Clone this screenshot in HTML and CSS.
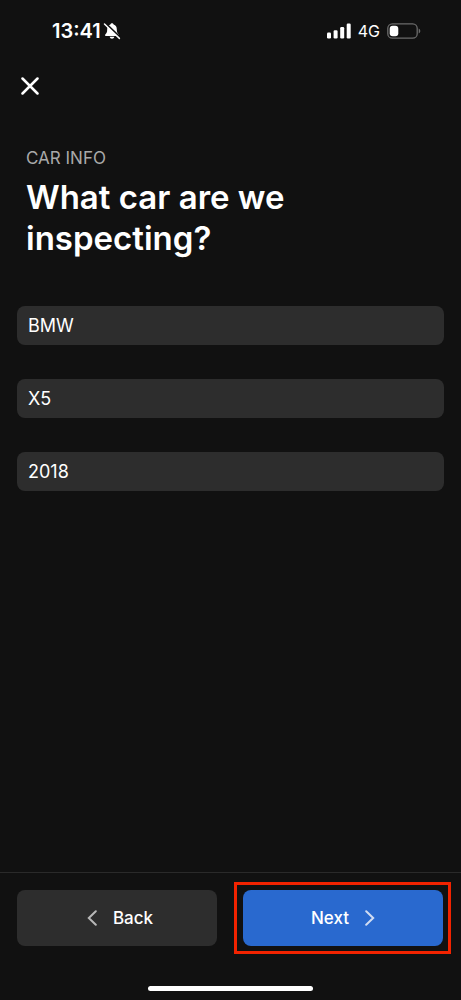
FILE: index.html
```html
<!DOCTYPE html>
<html lang="en">
<head>
<meta charset="utf-8">
<meta name="viewport" content="width=device-width, initial-scale=1">
<title>Car info</title>
<link rel="stylesheet" href="styles.css">
</head>
<body>
<div class="screen">
  <div class="status">
    <div class="status-group">
      <span class="clock">13:41</span>
      <svg class="bell" viewBox="0 0 18 18" width="18" height="18" aria-hidden="true">
        <path d="M9 1.200c-.9 0-1.500.600-1.600 1.400C5.200 3.300 4.200 5 4.200 7.200c0 3-.6 3.900-1.900 5.200-.6.600-.3 1.500.600 1.500h12.200c.9 0 1.200-.9.600-1.500-1.300-1.300-1.900-2.200-1.900-5.200 0-2.200-1-3.900-3.200-4.600C10.500 1.800 9.900 1.200 9 1.200z" fill="#fff"/>
        <path d="M6.700 14.800h4.600c-.2 1.200-1.100 2-2.300 2s-2.100-.8-2.300-2z" fill="#fff"/>
        <path d="M2.400 1.200L17.400 15.600" stroke="#111" stroke-width="2"/>
        <path d="M1.500 2L16.400 16.400" stroke="#fff" stroke-width="1.500" stroke-linecap="round"/>
      </svg>
    </div>
    <div class="status-group status-right">
      <svg viewBox="0 0 24 16" width="24" height="16" aria-hidden="true" fill="#fff">
        <rect x="0" y="9.500" width="4" height="6" rx="1.200"/>
        <rect x="6.600" y="7.200" width="4" height="8.300" rx="1.200"/>
        <rect x="13.200" y="4" width="4" height="11.500" rx="1.200"/>
        <rect x="19.700" y=".5" width="4" height="15" rx="1.200"/>
      </svg>
      <span class="network">4G</span>
      <svg viewBox="0 0 34 16" width="34" height="16" aria-hidden="true">
        <rect x=".8" y=".8" width="29.400" height="14.400" rx="4.500" fill="none" stroke="#6b6b6b" stroke-width="1.300"/>
        <rect x="2.700" y="2.700" width="8.600" height="10.600" rx="3" fill="#fff"/>
        <path d="M31.700 5.500v5c1-.4 1.600-1.400 1.600-2.500s-.6-2.100-1.600-2.500z" fill="#6b6b6b"/>
      </svg>
    </div>
  </div>

  <header class="topbar">
    <button class="close" type="button" aria-label="Close">
      <svg viewBox="0 0 18 18" width="18" height="18" aria-hidden="true">
        <path d="M1.500 1.500l15 15M16.500 1.500l-15 15" stroke="#fff" stroke-width="2.500" stroke-linecap="round"/>
      </svg>
    </button>
  </header>

  <main class="content">
    <div class="heading">
      <p class="eyebrow">CAR INFO</p>
      <h1 class="title">What car are we inspecting?</h1>
    </div>
    <form class="fields" id="car-form">
      <input class="field" type="text" aria-label="Make" value="BMW">
      <input class="field" type="text" aria-label="Model" value="X5">
      <input class="field" type="text" aria-label="Year" value="2018">
    </form>
  </main>

  <footer class="footer">
    <div class="actions">
      <button class="btn btn-back" type="button">
        <svg class="chevron-left" viewBox="0 0 10 16" width="10" height="16" aria-hidden="true"><path d="M8.800 1.200L1.800 8l7 6.800" fill="none" stroke="#b8b8b8" stroke-width="2" stroke-linecap="round"/></svg>
        Back
      </button>
      <div class="highlight">
        <button class="btn btn-next" type="submit" form="car-form">
          Next
          <svg viewBox="0 0 10 16" width="10" height="16" aria-hidden="true"><path d="M1.200 1.200l7 6.800-7 6.800" fill="none" stroke="#d0dcf2" stroke-width="2" stroke-linecap="round"/></svg>
        </button>
      </div>
    </div>
    <div class="home-bar"></div>
  </footer>
</div>
</body>
</html>
```
FILE: styles.css
```css
* {
  box-sizing: border-box;
}

body {
  margin: 0;
  background: #111;
  color: #fff;
  font-family: Inter, "Liberation Sans", sans-serif;
}

button,
input {
  font: inherit;
  color: inherit;
  border: 0;
}

button {
  cursor: pointer;
}

svg {
  display: block;
  flex: none;
}

.screen {
  display: flex;
  flex-direction: column;
  min-height: 100vh;
}

.status {
  display: flex;
  justify-content: space-between;
  align-items: center;
  padding: 19px 40px 0 52px;
}

.status-group {
  display: flex;
  align-items: center;
  gap: 2px;
}

.status-right {
  gap: 7px;
}

.clock {
  font-size: 20px;
  font-weight: 600;
  line-height: 24px;
}

.network {
  font-size: 16px;
  font-weight: 400;
  line-height: 24px;
}

.topbar {
  padding: 25px 12px 0;
}

.close {
  display: flex;
  padding: 9px;
  background: none;
}

.content {
  flex: 1;
  padding: 42px 17px 32px;
}

.heading {
  padding: 0 9px;
}

.eyebrow {
  margin: 0;
  color: #a9a9a9;
  font-size: 17px;
  line-height: 24px;
}

.title {
  max-width: 320px;
  margin: 7px 0 0;
  font-size: 33px;
  font-weight: 600;
  line-height: 41px;
}

.fields {
  display: flex;
  flex-direction: column;
  gap: 34px;
  margin-top: 47px;
}

.field {
  width: 100%;
  height: 39px;
  padding: 0 11px;
  border-radius: 8px;
  background: #2d2d2d;
  font-size: 18px;
}

.footer {
  padding: 9px 0;
  border-top: 1px solid #2a2a2a;
}

.actions {
  display: flex;
  align-items: center;
  gap: 17px;
  padding: 0 10px 0 17px;
}

.btn {
  display: flex;
  flex: 1;
  align-items: center;
  justify-content: center;
  gap: 16px;
  height: 56px;
  padding: 0;
  border-radius: 8px;
  font-size: 17px;
  font-weight: 500;
}

.btn-back {
  background: #2d2d2d;
}

.chevron-left {
  margin-left: 6px;
}

.highlight {
  display: flex;
  flex: 1;
  padding: 5px 5px 5px 6px;
  border: 3px solid #f22300;
}

.btn-next {
  background: #2969cf;
}

.home-bar {
  width: 165px;
  height: 5px;
  margin: 32px auto 0;
  border-radius: 3px;
  background: #fff;
}
```
